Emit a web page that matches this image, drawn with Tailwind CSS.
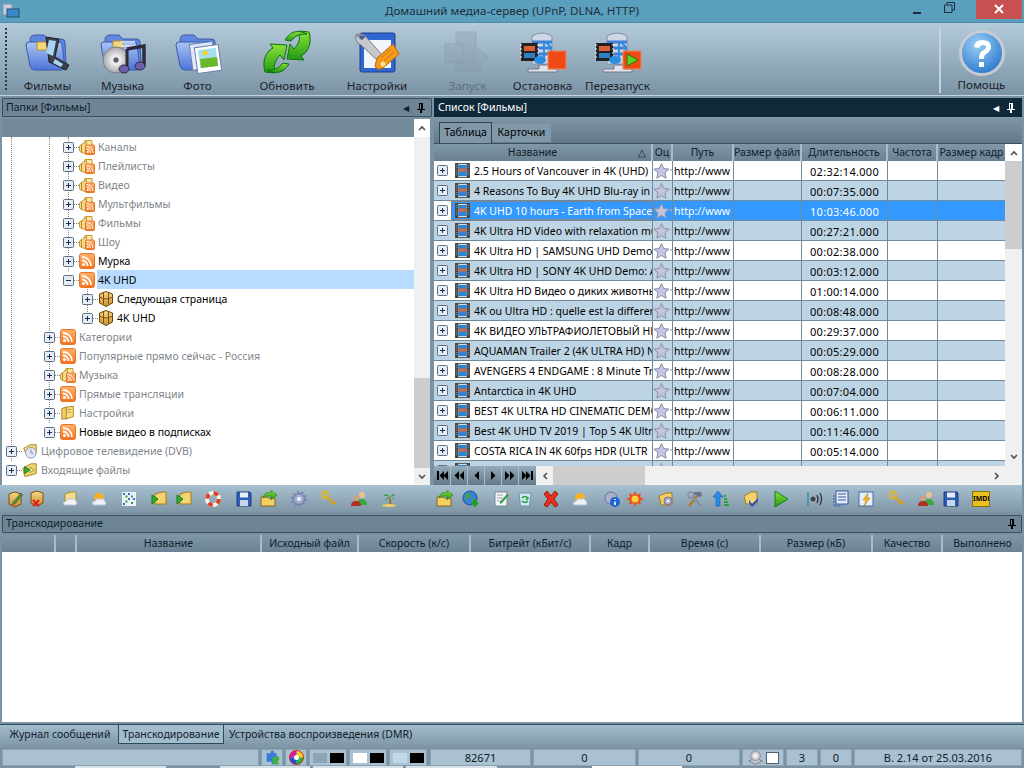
<!DOCTYPE html>
<html lang="ru">
  <head>
    <meta charset="UTF-8" />
    <script src="https://cdn.jsdelivr.net/npm/@tailwindcss/browser@4"></script>
    <title>Домашний медиа-сервер</title>
  </head>
  <body class="w-[1024px] h-[768px] overflow-hidden bg-[#7a92a2] font-['Noto_Sans',sans-serif] text-[10.5px] text-black">
    <!-- icon set -->
    <svg class="absolute w-0 h-0">
      <defs>
        <linearGradient id="gBlue" x1="0" y1="0" x2="0" y2="1"><stop offset="0" stop-color="#a9c4f5" /><stop offset="1" stop-color="#4d74d8" /></linearGradient>
        <linearGradient id="gGreen" x1="0" y1="0" x2="0" y2="1"><stop offset="0" stop-color="#8fe23a" /><stop offset="1" stop-color="#1f9a12" /></linearGradient>
        <linearGradient id="gGold" x1="0" y1="0" x2="0" y2="1"><stop offset="0" stop-color="#f6d98a" /><stop offset="1" stop-color="#c8902a" /></linearGradient>
        <linearGradient id="gOrange" x1="0" y1="0" x2="0" y2="1"><stop offset="0" stop-color="#ffb36b" /><stop offset="1" stop-color="#f5711c" /></linearGradient>
        <radialGradient id="gHelp" cx="0.4" cy="0.3" r="0.8"><stop offset="0" stop-color="#9bd0f5" /><stop offset="1" stop-color="#1f6fc8" /></radialGradient>
        <radialGradient id="gCd" cx="0.5" cy="0.5" r="0.5"><stop offset="0" stop-color="#8a8f96" /><stop offset="0.3" stop-color="#f0f0f0" /><stop offset="1" stop-color="#a8a8ac" /></radialGradient>
        <symbol id="folderBlue" viewBox="0 0 48 48">
          <path d="M6 12q0-5 5-5h9l4 4h13q4 0 4 3l1 22q0 4-4 4H14q-4 0-5-4z" fill="#5f86e0" stroke="#3c5aa8" />
          <path d="M2 17q0-3 3-3h30q3 0 3 3l3 22q0 3-3 3H11q-4 0-5-4z" fill="url(#gBlue)" stroke="#3c5aa8" />
        </symbol>
        <symbol id="server" viewBox="0 0 48 48">
          <path d="M13 8q10-6 20 0v28H13z" fill="#cfd6e4" stroke="#8791a8" />
          <path d="M13 14h20M13 20h20M13 26h20" stroke="#3f7fd6" stroke-width="3" />
          <rect x="2" y="15" width="17" height="18" fill="#222" />
          <rect x="5" y="18" width="11" height="5" fill="#d8603a" />
          <rect x="5" y="25" width="11" height="5" fill="#2f7fc8" />
          <path d="M1 17h2M1 21h2M1 25h2M1 29h2M18 17h2M18 21h2M18 25h2M18 29h2" stroke="#eee" />
          <path d="M25 14v17" stroke="#2a8fe0" stroke-width="2" />
          <ellipse cx="21" cy="32" rx="6" ry="4" fill="#2a8fe0" />
          <path d="M25 14q7 2 7 9" fill="none" stroke="#2a8fe0" stroke-width="2" />
          <path d="M20 37h10v4h8v3H9v-3h11z" fill="#dfe4ea" stroke="#778" />
        </symbol>
        <symbol id="rss" viewBox="0 0 16 16">
          <rect x="0.5" y="0.5" width="15" height="15" rx="2" fill="url(#gOrange)" stroke="#e8762a" />
          <circle cx="4.5" cy="11.5" r="1.6" fill="#fff" />
          <path d="M3 7.5a5.5 5.5 0 0 1 5.5 5.500M3 4a9 9 0 0 1 9 9" fill="none" stroke="#fff" stroke-width="1.8" />
        </symbol>
        <symbol id="rssFolder" viewBox="0 0 16 16">
          <path d="M5 4l1-2.500h7V6" fill="#f8e6a8" stroke="#c89a2a" />
          <path d="M2.500 5.500l5-3V15l-5-1.500zM.5 7l2-1.500v8l-2-1.500z" fill="#f4d98a" stroke="#b8881c" stroke-width="0.800" />
          <rect x="6.500" y="6" width="9" height="9.500" rx="1" fill="url(#gOrange)" stroke="#e07a2a" />
          <circle cx="8.800" cy="13" r="1" fill="#fff" />
          <path d="M7.500 10a4 4 0 0 1 4 4M7.500 7.500a6.500 6.500 0 0 1 6.500 6.500" fill="none" stroke="#fff" />
        </symbol>
        <symbol id="cube" viewBox="0 0 16 16">
          <path d="M1.500 3L8 .5 14.500 3v9L8 15.500 1.500 12z" fill="url(#gGold)" stroke="#6a4408" />
          <path d="M1.500 6Q8 10 14.500 6M5.500 2v11M10.500 2v11" fill="none" stroke="#7a5010" />
        </symbol>
        <symbol id="film" viewBox="0 0 16 16">
          <rect x="0.500" y="0.500" width="15" height="15" fill="#e8ecf0" stroke="#555" />
          <rect x="0.500" y="0.500" width="3" height="15" fill="#3a3a3a" />
          <rect x="12.500" y="0.500" width="3" height="15" fill="#3a3a3a" />
          <rect x="3.500" y="2" width="9" height="6" fill="#2f83d0" />
          <rect x="3.500" y="8" width="9" height="6" fill="#2f83d0" />
          <path d="M3.500 6h9v3h-9z" fill="#d8683a" />
          <path d="M2 2v12M14 2v12" stroke="#ddd" stroke-dasharray="1 1.500" />
        </symbol>
        <symbol id="star" viewBox="0 0 19 18">
          <path d="M8.500 1.500l2.200 5 5.300.6-4 3.700 1.100 5.400-4.600-2.700-4.700 2.700 1.100-5.400-4-3.700 5.300-.6z" fill="#c4c4de" stroke="#8f8fae" />
          <circle cx="18" cy="8" r="1" fill="#b4b4cc" />
        </symbol>
        <symbol id="plus" viewBox="0 0 11 11">
          <rect x="0.500" y="0.500" width="10" height="10" rx="1" fill="#e6ecf4" stroke="#5f6f88" />
          <path d="M3 5.500h5M5.500 3v5" stroke="#1c2c50" />
        </symbol>
        <symbol id="minus" viewBox="0 0 11 11">
          <rect x="0.500" y="0.500" width="10" height="10" rx="1" fill="#e6ecf4" stroke="#5f6f88" />
          <path d="M3 5.500h5" stroke="#1c2c50" />
        </symbol>
        <symbol id="folder" viewBox="0 0 18 18">
          <path d="M6 2.500l9-1V13l-9 3z" fill="#f8e08a" stroke="#a87a18" />
          <path d="M2 4l5-1.500V15l-5 1z" fill="#f2cf62" stroke="#a87a18" />
          <path d="M8 5h5M8 8h5" stroke="#c89a2a" />
        </symbol>
        <symbol id="folderDvb" viewBox="0 0 18 18">
          <path d="M2 6l7-4h7v9H4z" fill="#f4d880" stroke="#a87a18" />
          <circle cx="10" cy="11" r="6" fill="#dfe6f4" stroke="#8a94b0" />
          <path d="M10 7v4l3 1" fill="none" stroke="#7a84a0" />
        </symbol>
        <symbol id="palm" viewBox="0 0 18 18">
          <path d="M9 7q1 5 0 8h2q1-4-1-8z" fill="#9a6a20" />
          <path d="M10 7Q6 2 3 6q4-1 7 1q-4 0-5 4q3-3 5-4q3 0 4 3q1-3-4-3q4-2 5-1q-2-4-5 1z" fill="#2f9a2a" />
          <ellipse cx="9" cy="15.500" rx="7" ry="1.500" fill="#f0d060" />
        </symbol>
        <symbol id="people" viewBox="0 0 18 18">
          <circle cx="12" cy="5" r="3" fill="#f0c08a" />
          <path d="M7 15q0-6 5-6t5 6z" fill="#3aa83a" />
          <circle cx="6" cy="8" r="2.500" fill="#d8a070" />
          <path d="M1 16q0-5 5-5t5 5z" fill="#b03020" />
        </symbol>
        <symbol id="key" viewBox="0 0 18 18">
          <circle cx="5" cy="5" r="3.200" fill="none" stroke="#e8b820" stroke-width="2" />
          <path d="M7.500 7.500l8 6M12 11l-1.500 2M14 12.500l-1.500 2" stroke="#d8a010" stroke-width="2" />
        </symbol>
        <symbol id="floppy" viewBox="0 0 18 18">
          <path d="M2 2h13l1 1v13H2z" fill="#2c5cb8" stroke="#1c3c80" />
          <rect x="5" y="2.500" width="8" height="5" fill="#e8eef8" />
          <rect x="5" y="10" width="8" height="6" fill="#c8d4e8" />
        </symbol>
        <symbol id="gear" viewBox="0 0 18 18">
          <circle cx="9" cy="9" r="5.500" fill="#a0a8d0" stroke="#6870a0" />
          <circle cx="9" cy="9" r="7" fill="none" stroke="#8088b8" stroke-width="2.500" stroke-dasharray="2.200 2.200" />
          <circle cx="9" cy="9" r="2.300" fill="#e8eaf4" />
        </symbol>
        <symbol id="sun" viewBox="0 0 18 18">
          <circle cx="9" cy="8" r="5" fill="#f8b020" />
          <path d="M3 15q-2-3 2-4q1-3 5-2q4-1 5 2q2 2 0 4z" fill="#eef2f8" stroke="#b8c4d4" />
        </symbol>
        <symbol id="folderCloud" viewBox="0 0 18 18">
          <path d="M4 4l6-2h5v10H4z" fill="#f4dc90" stroke="#b08a30" />
          <path d="M3 15q-2-3 2-4q1-3 5-2q4-1 5 2q2 2 0 4z" fill="#f2f4f8" stroke="#b8c4d4" />
        </symbol>
        <symbol id="dots" viewBox="0 0 18 18">
          <rect x="2" y="2" width="14" height="14" fill="#eef2f8" />
          <path d="M3 3h2v2H3zM8 3h2v2H8zM13 8h2v2h-2zM3 13h2v2H3zM8 8h2v2H8z" fill="#2f6fd0" />
          <path d="M5.500 5.500h2v2h-2zM11 5.500h2v2h-2zM5.500 10.500h2v2h-2zM11 12h2v2h-2z" fill="#2fa040" />
        </symbol>
        <symbol id="folderPlay" viewBox="0 0 18 18">
          <path d="M5 4l7-2h4v12H5z" fill="#f4d470" stroke="#a87a18" />
          <path d="M2 5l6 4-6 5z" fill="#2fae2f" stroke="#1a7a1a" />
        </symbol>
        <symbol id="folderGo" viewBox="0 0 18 18">
          <path d="M1 7l9-5h6v11l-11 3H3z" fill="#f4d470" stroke="#a87a18" />
          <path d="M3 5v8l6-4z" fill="#2fae2f" stroke="#1a7a1a" />
          <path d="M9 6l5 3-5 3z" fill="#e8f0a0" stroke="#90a030" />
        </symbol>
        <symbol id="buoy" viewBox="0 0 18 18">
          <circle cx="9" cy="9" r="6" fill="none" stroke="#f2f2f2" stroke-width="4" />
          <circle cx="9" cy="9" r="6" fill="none" stroke="#e0401c" stroke-width="4" stroke-dasharray="4.700 4.700" />
        </symbol>
        <symbol id="folderArrow" viewBox="0 0 18 18">
          <path d="M1 7h6l1 1h7v8H1z" fill="#f2cf62" stroke="#8a6410" />
          <path d="M3 8C4 3 8 2 11 3V0l6 5-6 5V6Q6 5 3 8z" fill="url(#gGreen)" stroke="#1a7a1a" stroke-width="0.600" />
        </symbol>
        <symbol id="boxPen" viewBox="0 0 18 18">
          <path d="M3 4l6-2 6 2v10l-6 3-6-3z" fill="url(#gGold)" stroke="#7a5010" />
          <path d="M7 12l8-9 2 2-8 9-3 1z" fill="#30a030" stroke="#c03030" stroke-width="0.600" />
        </symbol>
        <symbol id="boxX" viewBox="0 0 18 18">
          <path d="M3 3l6-2 6 2v10l-6 3-6-3z" fill="url(#gGold)" stroke="#7a5010" />
          <path d="M5 10l6 6M11 10l-6 6" stroke="#e02020" stroke-width="2.200" />
        </symbol>
        <symbol id="globe" viewBox="0 0 18 18">
          <circle cx="8" cy="8" r="7" fill="#3a80d8" stroke="#1c4c98" />
          <path d="M4 3q4 0 4 3t-3 3-2 3zM10 9q4-1 4 1t-3 3z" fill="#3aa83a" />
          <path d="M13 10v7M9.500 13.500h7" stroke="#20a020" stroke-width="2.400" />
        </symbol>
        <symbol id="note" viewBox="0 0 18 18">
          <rect x="3" y="2" width="12" height="14" fill="#f4f6fa" stroke="#808898" />
          <path d="M5 5h6M5 8h6M5 11h4" stroke="#98a0b0" />
          <path d="M8 12l7-8 2 1-7 8-2 1z" fill="#30a040" />
        </symbol>
        <symbol id="recycle" viewBox="0 0 18 18">
          <path d="M3 3h12l-1.500 13h-9z" fill="#cfe6f4" stroke="#6a98b8" />
          <path d="M6 8q3-3 6 0l-2 2M12 11q-3 3-6 0" fill="none" stroke="#20a030" stroke-width="1.600" />
        </symbol>
        <symbol id="redX" viewBox="0 0 18 18">
          <path d="M2 4l3-3 4 5 4-5 3 3-4 5 4 6-3 2-4-5-4 5-3-2 4-6z" fill="#e8301c" stroke="#981808" />
        </symbol>
        <symbol id="gearInfo" viewBox="0 0 18 18">
          <circle cx="8" cy="8" r="6" fill="#a8b0cc" stroke="#6870a0" />
          <circle cx="12" cy="12" r="5" fill="#1c64d0" />
          <path d="M12 9v1M12 11.500v3.500" stroke="#fff" stroke-width="1.600" />
        </symbol>
        <symbol id="burst" viewBox="0 0 18 18">
          <path d="M9 1l2 4 4-2-1 4 4 2-4 2 1 4-4-2-2 4-2-4-4 2 1-4-4-2 4-2-1-4 4 2z" fill="#e8501c" />
          <circle cx="9" cy="9" r="3.500" fill="#f8d040" />
        </symbol>
        <symbol id="folderGear" viewBox="0 0 18 18">
          <path d="M2 6l7-3h6v12H4z" fill="#f2cf62" stroke="#a87a18" />
          <circle cx="11" cy="11" r="4" fill="#a8a8c0" stroke="#7070a0" />
          <circle cx="11" cy="11" r="1.500" fill="#eee" />
        </symbol>
        <symbol id="tools" viewBox="0 0 18 18">
          <path d="M3 16L12 5" stroke="#b07a30" stroke-width="2.400" />
          <path d="M8 2h7l1 4-3 1-2-2H8z" fill="#68708c" />
          <path d="M15 16L6 6" stroke="#8a8fa0" stroke-width="2.400" />
          <circle cx="5" cy="5" r="3" fill="none" stroke="#8a8fa0" stroke-width="1.600" />
        </symbol>
        <symbol id="upBars" viewBox="0 0 18 18">
          <path d="M6 1l5 6H8v9H4V7H1z" fill="#2a8ce8" stroke="#1860b0" stroke-width="0.600" />
          <path d="M12 15h5M12 12h4M12 9h3M12 6h2" stroke="#30a030" stroke-width="1.800" />
        </symbol>
        <symbol id="folderCheck" viewBox="0 0 18 18">
          <path d="M2 6l7-4h6v12H4z" fill="#f4d470" stroke="#a87a18" />
          <path d="M7 10l3 4 6-6v3l-6 6-3-4z" fill="#2050c0" />
        </symbol>
        <symbol id="play" viewBox="0 0 18 18">
          <path d="M3 1l13 8-13 8z" fill="url(#gGreen)" stroke="#1a7a1a" />
        </symbol>
        <symbol id="sound" viewBox="0 0 18 18">
          <path d="M1 2v14" stroke="#3a90a8" stroke-width="1.600" />
          <circle cx="6" cy="9" r="2.500" fill="#444" />
          <path d="M10 5q2 4 0 8M13 3q3 6 0 12" fill="none" stroke="#334" stroke-width="1.300" />
        </symbol>
        <symbol id="list" viewBox="0 0 18 18">
          <rect x="4" y="1" width="12" height="13" fill="#e4ecf8" stroke="#3858a8" />
          <path d="M6 4h8M6 7h8M6 10h8" stroke="#3858a8" />
          <path d="M2 5v11h8" fill="none" stroke="#3858a8" stroke-dasharray="2 1" />
        </symbol>
        <symbol id="bolt" viewBox="0 0 18 18">
          <rect x="2" y="2" width="14" height="14" fill="#e8eef8" stroke="#4868a8" />
          <path d="M11 3l-5 7h3l-2 6 6-8h-3z" fill="#f0b820" stroke="#a87a10" stroke-width="0.500" />
        </symbol>
        <symbol id="puzzle" viewBox="0 0 18 18">
          <path d="M2 4h5q-1-3 2-3t2 3h3v4q3-1 3 2t-3 2v5H8v-3H2z" fill="#3a7ad8" />
          <path d="M9 8h8v4l-2 1 2 4H9z" fill="#40b040" />
        </symbol>
        <symbol id="disc" viewBox="0 0 18 18">
          <path d="M1 13l8-3 8 3-8 4z" fill="#c8ccd4" stroke="#707880" />
          <circle cx="9" cy="7" r="6" fill="url(#gCd)" stroke="#9090a8" />
          <circle cx="9" cy="7" r="1.500" fill="#fff" />
        </symbol>
        <symbol id="wheel" viewBox="0 0 18 18">
          <circle cx="9" cy="9" r="8" fill="none" stroke="#e02020" stroke-width="2" />
          <path d="M9 1a8 8 0 0 1 8 8H9z" fill="#f0d020" />
          <path d="M17 9a8 8 0 0 1-8 8V9z" fill="#30b030" />
          <path d="M9 17a8 8 0 0 1-8-8h8z" fill="#2050d0" />
          <path d="M1 9a8 8 0 0 1 8-8v8z" fill="#d020a0" />
          <circle cx="9" cy="9" r="3" fill="#fff" />
        </symbol>
      </defs>
    </svg>

    <!-- title bar -->
    <div class="h-[23px] bg-[#5b9fbe] flex items-center border-b border-[#4f8ba6]">
      <svg class="w-[18px] h-[16px] ml-[2px]" viewBox="0 0 18 16">
        <rect x="1" y="1" width="9" height="11" fill="#c8cede" stroke="#8a90a8" />
        <rect x="5" y="6" width="12" height="8" fill="#3a88c8" stroke="#24506e" />
      </svg>
      <div class="flex-1 text-center text-[11.6px] text-[#1d2e38] pl-[91px] mb-[1px]">Домашний медиа-сервер (UPnP, DLNA, HTTP)</div>
      <div class="w-[8px] h-[2px] bg-[#18303e] mr-[23px] mt-[4px]"></div>
      <svg class="w-[11px] h-[11px] mr-[21px] mb-[7px]" viewBox="0 0 11 11"><path d="M3 3V.5h7.500V8H8M.5 3h7.500v7.500H.5z" fill="none" stroke="#18303e" /></svg>
      <div class="w-[46px] h-[19px] mr-[2px] mb-[4px] bg-[#c75050] flex items-center justify-center">
        <svg class="w-[10px] h-[10px]" viewBox="0 0 10 10"><path d="M1 1l8 8M9 1l-8 8" stroke="#fff" stroke-width="2" /></svg>
      </div>
    </div>

    <!-- main toolbar -->
    <div class="h-[73px] bg-gradient-to-b from-[#b3cbdb] to-[#7b94a5] border-b border-[#c4d3dd] flex text-[11.6px] text-[#1a2228]">
      <div class="w-[2px] mt-[5px] mb-[5px] ml-[5px] border-l-2 border-dotted border-[#2c3e4a]"></div>
      <div class="w-[75px] ml-[3px] flex flex-col items-center">
        <svg class="w-[48px] h-[48px] mt-[5px]" viewBox="0 0 48 48">
          <use href="#folderBlue" />
          <rect x="13" y="14" width="10" height="8" fill="#f2d880" stroke="#b89030" />
          <path d="M22 9l13 2-4 18 14 8-3 5-17-8z" fill="#3c4048" stroke="#222" />
          <path d="M25 12l7 1-3 15-7-3zM31 31l8 5-2 3-8-4z" fill="#a8d4f4" />
        </svg>
        <span class="mt-[3px] leading-[14px]">Фильмы</span>
      </div>
      <div class="w-[75px] flex flex-col items-center">
        <svg class="w-[48px] h-[48px] mt-[5px]" viewBox="0 0 48 48">
          <use href="#folderBlue" />
          <rect x="14" y="13" width="10" height="7" fill="#f2d880" stroke="#b89030" />
          <path d="M22 14h14M22 18h14" stroke="#dfe8fa" stroke-width="1.500" />
          <circle cx="17" cy="32" r="13" fill="url(#gCd)" stroke="#7a7e88" />
          <circle cx="17" cy="32" r="2.500" fill="#555c70" />
          <path d="M28 21l17-3v20" fill="none" stroke="#2c2c3e" stroke-width="3.500" />
          <path d="M28 21v19" stroke="#2c2c3e" stroke-width="3" />
          <ellipse cx="25" cy="41" rx="5" ry="4" fill="#6a60a8" stroke="#2c2c3e" />
          <ellipse cx="41" cy="38" rx="5" ry="4" fill="#6a60a8" stroke="#2c2c3e" />
        </svg>
        <span class="mt-[3px] leading-[14px]">Музыка</span>
      </div>
      <div class="w-[75px] flex flex-col items-center">
        <svg class="w-[48px] h-[48px] mt-[5px]" viewBox="0 0 48 48">
          <use href="#folderBlue" />
          <rect x="17" y="15" width="23" height="26" fill="#dfe8fa" stroke="#6a80b0" transform="rotate(-8 28 28)" />
          <rect x="22" y="18" width="24" height="26" fill="#fff" stroke="#6a80b0" transform="rotate(-8 34 31)" />
          <rect x="25" y="21" width="18" height="18" fill="#a8dcf0" transform="rotate(-8 34 30)" />
          <path d="M26 31l17-2 1 9-17 2z" fill="#6ab82a" />
          <circle cx="31" cy="25" r="2.500" fill="#f8d020" />
        </svg>
        <span class="mt-[3px] leading-[14px]">Фото</span>
      </div>
      <div class="w-[90px] ml-[7px] flex flex-col items-center">
        <svg class="w-[48px] h-[48px] mt-[5px]" viewBox="0 0 48 48">
          <path d="M2 44c-3-10 0-20 8-24l-3-4 17 1-3 15-4-5c-4 4-7 10-5 18z" fill="url(#gGreen)" stroke="#107010" />
          <path d="M46 4c3 10 0 20-8 24l3 4-17-1 3-15 4 5c4-4 7-10 5-18z" fill="url(#gGreen)" stroke="#107010" />
          <path d="M44 6C32 0 26 6 22 12l6 1q6-8 16-7z" fill="url(#gGreen)" stroke="#107010" />
          <path d="M4 42C16 48 22 42 26 36l-6-1q-6 8-16 7z" fill="url(#gGreen)" stroke="#107010" />
        </svg>
        <span class="mt-[3px] leading-[14px]">Обновить</span>
      </div>
      <div class="w-[90px] flex flex-col items-center">
        <svg class="w-[48px] h-[48px] mt-[5px]" viewBox="0 0 48 48">
          <rect x="7" y="5" width="35" height="39" rx="2" fill="#2f66cf" stroke="#1c3c8c" />
          <rect x="11" y="12" width="27" height="28" fill="#f2f5fb" />
          <path d="M3 7a8 8 0 0 1 11 3l16 18-5 5L8 17a8 8 0 0 1-5-10l6 5 4-4z" fill="#c6c8cc" stroke="#7a7c82" />
          <path d="M24 30l16-14 6 10-16 14q-6 3-8-2z" fill="#f59a1c" stroke="#b86a0c" />
          <path d="M28 30l10-9M31 33l10-9" stroke="#c87808" />
          <circle cx="30" cy="36" r="2.500" fill="#fbe0a0" />
        </svg>
        <span class="mt-[3px] leading-[14px]">Настройки</span>
      </div>
      <div class="w-[75px] ml-[8px] flex flex-col items-center">
        <svg class="w-[48px] h-[48px] mt-[5px] opacity-30" viewBox="0 0 48 48">
          <g fill="#889aa8" stroke="#6e808e">
            <path d="M12 4h20v32H12z" />
            <rect x="1" y="16" width="18" height="18" />
            <path d="M30 18l15 12-15 12z" />
            <path d="M10 38h26v5H10z" />
          </g>
        </svg>
        <span class="mt-[3px] leading-[14px] text-[#5f707c]">Запуск</span>
      </div>
      <div class="w-[75px] flex flex-col items-center">
        <svg class="w-[48px] h-[48px] mt-[5px]" viewBox="0 0 48 48">
          <use href="#server" />
          <rect x="29" y="23" width="18" height="18" fill="#f04a14" stroke="#e88a5a" />
        </svg>
        <span class="mt-[3px] leading-[14px]">Остановка</span>
      </div>
      <div class="w-[75px] flex flex-col items-center">
        <svg class="w-[48px] h-[48px] mt-[5px]" viewBox="0 0 48 48">
          <use href="#server" />
          <rect x="29" y="23" width="18" height="18" fill="#f04a14" stroke="#e88a5a" />
          <path d="M33 26l11 6-11 6z" fill="#60d020" stroke="#287010" />
        </svg>
        <span class="mt-[3px] leading-[14px]">Перезапуск</span>
      </div>
      <div class="w-[2px] ml-auto mt-[5px] mb-[2px] bg-[#c4d3dd]"></div>
      <div class="w-[81px] mr-[2px] flex flex-col items-center">
        <svg class="w-[46px] h-[46px] mt-[7px]" viewBox="0 0 46 46">
          <circle cx="23" cy="23" r="21.500" fill="url(#gHelp)" stroke="#c8ccd2" stroke-width="3" />
          <path d="M15 17q1-7 8-7 9 0 9 7 0 4-5 7-2 1-2 5h-5q0-6 3-8 4-2 4-4 0-2-3-2-3 0-4 3zM20 32h5v5h-5z" fill="#fff" />
        </svg>
        <span class="mt-[2px] leading-[14px]">Помощь</span>
      </div>
    </div>

    <!-- folders and list -->
    <div class="h-[416px] flex">
      <div class="w-[430px] ml-[2px] pt-[2px] flex flex-col">
        <div class="h-[19px] bg-[#6e8595] border border-[#3a5060] rounded-[1px] flex items-center pl-[3px] pr-[6px] pt-[1px] text-[#10202a]">
          <span class="flex-1">Папки [Фильмы]</span>
          <span class="text-[8px] mr-[8px]">◀</span>
          <svg class="w-[8px] h-[10px]" viewBox="0 0 8 10"><path d="M2 0h4v6h2v1H5v3H3V7H0V6h2zM3 1v5h1V1z" fill="#000" /></svg>
        </div>
        <div class="h-[366px] mt-[2px] flex">
          <div class="w-[412px] flex flex-col">
            <div class="h-[18px] bg-[#728a9a]"></div>
            <div id="tree" class="flex-1 bg-white relative overflow-hidden"></div>
          </div>
          <div class="w-[16px] flex flex-col bg-[#f0f0f0]">
            <div class="h-[18px] bg-white flex items-center justify-center"><svg class="w-[8px] h-[6px]" viewBox="0 0 8 6"><path d="M1 5l3-3 3 3" fill="none" stroke="#505050" stroke-width="1.600" /></svg></div>
            <div class="h-[241px]"></div>
            <div class="h-[90px] bg-[#cdcdcd]"></div>
            <div class="flex-1 flex items-center justify-center"><svg class="w-[8px] h-[6px]" viewBox="0 0 8 6"><path d="M1 1l3 3 3-3" fill="none" stroke="#505050" stroke-width="1.600" /></svg></div>
          </div>
        </div>
        <div class="flex-1 bg-gradient-to-b from-[#a8c1d1] to-[#7f97a7] flex items-center pl-[4px] -ml-[2px] w-[436px]">
          <svg class="w-[18px] h-[18px] ml-[2px]"><use href="#boxPen" /></svg>
          <svg class="w-[18px] h-[18px] ml-[4px]"><use href="#boxX" /></svg>
          <svg class="w-[18px] h-[18px] ml-[15px]"><use href="#folderCloud" /></svg>
          <svg class="w-[18px] h-[18px] ml-[11px]"><use href="#sun" /></svg>
          <svg class="w-[18px] h-[18px] ml-[12px]"><use href="#dots" /></svg>
          <svg class="w-[18px] h-[18px] ml-[12px]"><use href="#folderPlay" /></svg>
          <svg class="w-[18px] h-[18px] ml-[7px]"><use href="#folderPlay" /></svg>
          <svg class="w-[18px] h-[18px] ml-[11px]"><use href="#buoy" /></svg>
          <svg class="w-[18px] h-[18px] ml-[13px]"><use href="#floppy" /></svg>
          <svg class="w-[18px] h-[18px] ml-[7px]"><use href="#folderArrow" /></svg>
          <svg class="w-[18px] h-[18px] ml-[12px]"><use href="#gear" /></svg>
          <svg class="w-[18px] h-[18px] ml-[12px]"><use href="#key" /></svg>
          <svg class="w-[18px] h-[18px] ml-[12px]"><use href="#people" /></svg>
          <svg class="w-[18px] h-[18px] ml-[12px]"><use href="#palm" /></svg>
        </div>
      </div>

      <div class="w-[588px] ml-[2px] pt-[2px] flex flex-col">
        <div class="h-[19px] bg-[#10293a] flex items-center pl-[4px] pr-[7px] pt-[1px] text-white">
          <span class="flex-1">Список [Фильмы]</span>
          <span class="text-[8px] mr-[8px]">◀</span>
          <svg class="w-[8px] h-[10px]" viewBox="0 0 8 10"><path d="M2 0h4v6h2v1H5v3H3V7H0V6h2zM3 1v5h1V1z" fill="#fff" /></svg>
        </div>
        <div class="h-[27px] bg-gradient-to-b from-[#7f97a7] to-[#627a8a] border-b border-[#3a5060] flex items-end pl-[5px]">
          <div class="h-[21px] w-[53px] bg-[#7f97a7] border border-b-0 border-[#2c4454] flex items-center justify-center">Таблица</div>
          <div class="h-[18px] w-[59px] bg-[#8098a8] flex items-center justify-center mb-[1px]">Карточки</div>
        </div>
        <div class="h-[322px] flex bg-white">
          <div class="w-[571px] flex flex-col overflow-hidden">
            <div class="h-[17px] shrink-0 flex bg-gradient-to-b from-[#7f97a7] to-[#6a8292] text-center leading-[17px] text-[#10202a]">
              <div class="w-[219px] border-r-2 border-[#a9bcc9] relative pr-[20px]">Название<span class="absolute right-[5px] top-0 text-[10px]">△</span></div>
              <div class="w-[20px] border-r-2 border-[#a9bcc9] overflow-hidden">Оц</div>
              <div class="w-[61px] border-r-2 border-[#a9bcc9]">Путь</div>
              <div class="w-[68px] border-r-2 border-[#a9bcc9] overflow-hidden whitespace-nowrap">Размер файл</div>
              <div class="w-[86px] border-r-2 border-[#a9bcc9]">Длительность</div>
              <div class="w-[50px] border-r-2 border-[#a9bcc9]">Частота</div>
              <div class="flex-1 overflow-hidden whitespace-nowrap">Размер кадр</div>
            </div>
            <div id="rows"></div>
          </div>
          <div class="w-[17px] flex flex-col bg-[#f0f0f0]">
            <div class="h-[17px] bg-white flex items-center justify-center"><svg class="w-[8px] h-[6px]" viewBox="0 0 8 6"><path d="M1 5l3-3 3 3" fill="none" stroke="#505050" stroke-width="1.600" /></svg></div>
            <div class="h-[88px] bg-[#cdcdcd]"></div>
            <div class="flex-1 flex items-end justify-center pb-[6px]"><svg class="w-[8px] h-[6px]" viewBox="0 0 8 6"><path d="M1 1l3 3 3-3" fill="none" stroke="#505050" stroke-width="1.600" /></svg></div>
          </div>
        </div>
        <div class="h-[19px] flex bg-[#f0f0f0]">
          <div class="w-[102px] flex bg-gradient-to-b from-[#93abbb] to-[#63798a]">
            <div class="w-[17px] border-r border-[#a9bcc9] flex items-center justify-center"><svg class="w-[11px] h-[9px]" viewBox="0 0 11 9"><path d="M0 0h2v9H0zM7 0v9L2.500 4.500zM11 0v9L6.500 4.500z" /></svg></div>
            <div class="w-[17px] border-r border-[#a9bcc9] flex items-center justify-center"><svg class="w-[10px] h-[9px]" viewBox="0 0 10 9"><path d="M5 0v9L.5 4.500zM10 0v9L5.500 4.500z" /></svg></div>
            <div class="w-[17px] border-r border-[#a9bcc9] flex items-center justify-center"><svg class="w-[5px] h-[9px]" viewBox="0 0 5 9"><path d="M5 0v9L.5 4.500z" /></svg></div>
            <div class="w-[17px] border-r border-[#a9bcc9] flex items-center justify-center"><svg class="w-[5px] h-[9px]" viewBox="0 0 5 9"><path d="M0 0v9l4.500-4.500z" /></svg></div>
            <div class="w-[17px] border-r border-[#a9bcc9] flex items-center justify-center"><svg class="w-[10px] h-[9px]" viewBox="0 0 10 9"><path d="M0 0v9l4.500-4.500zM5 0v9l4.500-4.500z" /></svg></div>
            <div class="w-[17px] flex items-center justify-center"><svg class="w-[11px] h-[9px]" viewBox="0 0 11 9"><path d="M9 0h2v9H9zM0 0v9l4.500-4.500zM4 0v9l4.500-4.500z" /></svg></div>
          </div>
          <div class="w-[17px] flex items-center justify-center"><svg class="w-[6px] h-[8px]" viewBox="0 0 6 8"><path d="M5 1L2 4l3 3" fill="none" stroke="#505050" stroke-width="1.600" /></svg></div>
          <div class="w-[92px] bg-[#cdcdcd]"></div>
          <div class="flex-1 flex items-center justify-end pr-[22px]"><svg class="w-[6px] h-[8px]" viewBox="0 0 6 8"><path d="M1 1l3 3-3 3" fill="none" stroke="#505050" stroke-width="1.600" /></svg></div>
        </div>
        <div class="flex-1 bg-gradient-to-b from-[#a8c1d1] to-[#7f97a7] flex items-center pl-[2px]">
          <svg class="w-[18px] h-[18px]"><use href="#folderArrow" /></svg>
          <svg class="w-[18px] h-[18px] ml-[8px]"><use href="#globe" /></svg>
          <svg class="w-[18px] h-[18px] ml-[12px]"><use href="#note" /></svg>
          <svg class="w-[18px] h-[18px] ml-[6px]"><use href="#recycle" /></svg>
          <svg class="w-[18px] h-[18px] ml-[8px]"><use href="#redX" /></svg>
          <svg class="w-[18px] h-[18px] ml-[11px]"><use href="#sun" /></svg>
          <svg class="w-[18px] h-[18px] ml-[14px]"><use href="#gearInfo" /></svg>
          <svg class="w-[18px] h-[18px] ml-[5px]"><use href="#burst" /></svg>
          <svg class="w-[18px] h-[18px] ml-[13px]"><use href="#folderGear" /></svg>
          <svg class="w-[18px] h-[18px] ml-[11px]"><use href="#tools" /></svg>
          <svg class="w-[18px] h-[18px] ml-[8px]"><use href="#upBars" /></svg>
          <svg class="w-[18px] h-[18px] ml-[12px]"><use href="#folderCheck" /></svg>
          <svg class="w-[18px] h-[18px] ml-[12px]"><use href="#play" /></svg>
          <svg class="w-[18px] h-[18px] ml-[17px]"><use href="#sound" /></svg>
          <svg class="w-[18px] h-[18px] ml-[7px]"><use href="#list" /></svg>
          <svg class="w-[18px] h-[18px] ml-[7px]"><use href="#bolt" /></svg>
          <svg class="w-[18px] h-[18px] ml-[13px]"><use href="#key" /></svg>
          <svg class="w-[18px] h-[18px] ml-[11px]"><use href="#people" /></svg>
          <svg class="w-[18px] h-[18px] ml-[7px]"><use href="#floppy" /></svg>
          <div class="w-[18px] h-[16px] ml-[12px] bg-[#e8c020] border border-[#8a7010] text-[7px] font-bold leading-[14px] text-center overflow-hidden">IMDb</div>
        </div>
      </div>
    </div>

    <!-- transcoding -->
    <div class="h-[210px] mx-[2px] pt-[3px] flex flex-col">
      <div class="h-[18px] bg-[#6e8595] border border-[#3a5060] rounded-[1px] flex items-center pl-[3px] pr-[5px] text-[#10202a]">
        <span class="flex-1">Транскодирование</span>
        <svg class="w-[8px] h-[10px]" viewBox="0 0 8 10"><path d="M2 0h4v6h2v1H5v3H3V7H0V6h2zM3 1v5h1V1z" fill="#000" /></svg>
      </div>
      <div class="h-[17px] mt-[2px] flex bg-gradient-to-b from-[#7f97a7] to-[#6a8292] text-center leading-[17px] text-[#10202a] whitespace-nowrap">
        <div class="w-[54px] border-r-2 border-[#a9bcc9]"></div>
        <div class="w-[21px] border-r-2 border-[#a9bcc9]"></div>
        <div class="w-[185px] border-r-2 border-[#a9bcc9]">Название</div>
        <div class="w-[97px] border-r-2 border-[#a9bcc9]">Исходный файл</div>
        <div class="w-[112px] border-r-2 border-[#a9bcc9]">Скорость (к/с)</div>
        <div class="w-[120px] border-r-2 border-[#a9bcc9]">Битрейт (кБит/с)</div>
        <div class="w-[59px] border-r-2 border-[#a9bcc9]">Кадр</div>
        <div class="w-[111px] border-r-2 border-[#a9bcc9]">Время (с)</div>
        <div class="w-[112px] border-r-2 border-[#a9bcc9]">Размер (кБ)</div>
        <div class="w-[70px] border-r-2 border-[#a9bcc9]">Качество</div>
        <div class="flex-1">Выполнено</div>
      </div>
      <div class="flex-1 bg-white"></div>
    </div>

    <!-- bottom tabs -->
    <div class="h-[25px] mt-[2px] border-t border-[#2c4a5c] bg-gradient-to-b from-[#a3bccc] to-[#7a92a2] flex items-start pl-[2px] text-[#10202a]">
      <div class="w-[116px] h-[19px] leading-[18px] text-center">Журнал сообщений</div>
      <div class="w-[106px] h-[19px] leading-[18px] text-center bg-[#a3bccc] border-x border-b border-[#2c4a5c]">Транскодирование</div>
      <div class="h-[19px] leading-[18px] pl-[5px]">Устройства воспроизведения (DMR)</div>
    </div>

    <!-- status bar -->
    <div class="h-[17px] flex gap-[2px] px-[2px] text-[#10202a] text-center leading-[16px]">
      <div class="w-[257px] bg-[#a9c1d1] border border-[#8aa2b2]"></div>
      <div class="w-[22px] bg-[#a9c1d1] border border-[#8aa2b2] flex items-center justify-center"><svg class="w-[15px] h-[15px]"><use href="#puzzle" /></svg></div>
      <div class="w-[22px] bg-[#a9c1d1] border border-[#8aa2b2] flex items-center justify-center"><svg class="w-[15px] h-[15px]"><use href="#wheel" /></svg></div>
      <div class="w-[38px] bg-[#a9c1d1] border border-[#8aa2b2] flex items-center justify-center gap-[3px]"><span class="w-[14px] h-[10px] bg-[#8ca4b4]"></span><span class="w-[14px] h-[10px] bg-black"></span></div>
      <div class="w-[38px] bg-[#a9c1d1] border border-[#8aa2b2] flex items-center justify-center gap-[3px]"><span class="w-[14px] h-[10px] bg-white"></span><span class="w-[14px] h-[10px] bg-black"></span></div>
      <div class="w-[38px] bg-[#a9c1d1] border border-[#8aa2b2] flex items-center justify-center gap-[3px]"><span class="w-[14px] h-[10px] bg-[#c0d8e8]"></span><span class="w-[14px] h-[10px] bg-black"></span></div>
      <div class="w-[101px] bg-[#a9c1d1] border border-[#8aa2b2] ml-[1px] text-[11px]">82671</div>
      <div class="w-[103px] bg-[#a9c1d1] border border-[#8aa2b2] text-[11px]">0</div>
      <div class="w-[102px] bg-[#a9c1d1] border border-[#8aa2b2] text-[11px]">0</div>
      <div class="w-[42px] bg-[#a9c1d1] border border-[#8aa2b2] flex items-center justify-center gap-[3px]"><svg class="w-[15px] h-[15px]"><use href="#disc" /></svg><span class="w-[13px] h-[12px] bg-white border border-[#4a6272]"></span></div>
      <div class="w-[32px] bg-[#a9c1d1] border border-[#8aa2b2] text-[11px]">3</div>
      <div class="w-[32px] bg-[#a9c1d1] border border-[#8aa2b2] text-[11px]">0</div>
      <div class="flex-1 bg-[#a9c1d1] border border-[#8aa2b2] text-[11px]">В. 2.14 от 25.03.2016</div>
    </div>
    <div class="h-[2px] flex">
      <div class="w-[91px] ml-[75px] bg-[#d8e2ea]"></div>
      <div class="w-[90px] ml-[54px] bg-[#d8e2ea]"></div>
      <div class="w-[90px] ml-[3px] bg-[#d8e2ea]"></div>
      <div class="w-[91px] ml-[3px] bg-[#d8e2ea]"></div>
      <div class="w-[90px] ml-[95px] bg-white"></div>
    </div>

    <script>
      // дерево папок: [уровень, значок, текст, яркий, раскрыт]
      const treeData = [
        [2, "rssFolder", "Каналы"],
        [2, "rssFolder", "Плейлисты"],
        [2, "rssFolder", "Видео"],
        [2, "rssFolder", "Мультфильмы"],
        [2, "rssFolder", "Фильмы"],
        [2, "rssFolder", "Шоу"],
        [2, "rss", "Мурка", true],
        [2, "rss", "4K UHD", true, true],
        [3, "cube", "Следующая страница", true],
        [3, "cube", "4K UHD", true],
        [1, "rss", "Категории"],
        [1, "rss", "Популярные прямо сейчас - Россия"],
        [1, "rssFolder", "Музыка"],
        [1, "rss", "Прямые трансляции"],
        [1, "folder", "Настройки"],
        [1, "rss", "Новые видео в подписках", true],
        [0, "folderDvb", "Цифровое телевидение (DVB)"],
        [0, "folderGo", "Входящие файлы"],
      ];
      const indent = ["pl-[4px]", "pl-[42px]", "pl-[61px]", "pl-[80px]"];
      const tree = document.querySelector("#tree");
      let treeHtml = `
        <div class="absolute left-[9px] top-0 h-[324px] border-l border-dotted border-[#888]"></div>
        <div class="absolute left-[47px] top-0 h-[286px] border-l border-dotted border-[#888]"></div>
        <div class="absolute left-[66px] top-0 h-[134px] border-l border-dotted border-[#888]"></div>
        <div class="absolute left-[85px] top-[143px] h-[38px] border-l border-dotted border-[#888]"></div>`;
      treeData.forEach(([level, icon, text, bright, open]) => {
        const selected = open ? "bg-[#b8dcff]" : "";
        const color = bright ? "text-black" : "text-[#80868c]";
        treeHtml += `
        <div class="h-[19px] flex items-center relative ${indent[level]}">
          <svg class="w-[11px] h-[11px] shrink-0 mt-[1px]"><use href="#${open ? "minus" : "plus"}" /></svg>
          <div class="w-[5px] border-t border-dotted border-[#888] mt-[1px]"></div>
          <svg class="w-[16px] h-[16px] shrink-0 mt-[1px]"><use href="#${icon}" /></svg>
          <div class="ml-[2px] pl-[1px] h-[19px] leading-[20px] flex-1 whitespace-nowrap ${selected} ${color}">${text}</div>
        </div>`;
      });
      tree.innerHTML = treeHtml;

      // таблица
      const movies = [
        ["2.5 Hours of Vancouver in 4K (UHD)", "02:32:14.000"],
        ["4 Reasons To Buy 4K UHD Blu-ray in", "00:07:35.000"],
        ["4K UHD 10 hours - Earth from Space", "10:03:46.000"],
        ["4K Ultra HD Video with relaxation mus", "00:27:21.000"],
        ["4K Ultra HD | SAMSUNG UHD Demo: N", "00:02:38.000"],
        ["4K Ultra HD | SONY 4K UHD Demo: Au", "00:03:12.000"],
        ["4K Ultra HD Видео о диких животны", "01:00:14.000"],
        ["4K ou Ultra HD : quelle est la differer", "00:08:48.000"],
        ["4K ВИДЕО УЛЬТРАФИОЛЕТОВЫЙ HD", "00:29:37.000"],
        ["AQUAMAN Trailer 2 (4K ULTRA HD) N", "00:05:29.000"],
        ["AVENGERS 4 ENDGAME : 8 Minute Tr", "00:08:28.000"],
        ["Antarctica in 4K UHD", "00:07:04.000"],
        ["BEST 4K ULTRA HD CINEMATIC DEMC", "00:06:11.000"],
        ["Best 4K UHD TV 2019 | Top 5 4K Ultra", "00:11:46.000"],
        ["COSTA RICA IN 4K 60fps HDR (ULTR", "00:05:14.000"],
        ["", ""],
      ];
      document.querySelector("#rows").innerHTML = movies
        .map(([name, time], i) => {
          const active = i === 2;
          const bg = active ? "bg-[#3399ff] text-white" : i % 2 ? "bg-[#bcd4e4]" : "bg-white";
          const nameBox = active ? "outline-1 outline-dotted outline-[#c86a20] -outline-offset-1" : "";
          return `
          <div class="h-[20px] flex border-b border-[#6f8a9c] ${bg}">
            <div class="w-[17px] flex items-center justify-center shrink-0 ${active ? "bg-white" : ""}"><svg class="w-[11px] h-[11px]"><use href="#plus" /></svg></div>
            <div class="w-[202px] flex items-center whitespace-nowrap overflow-hidden border-r border-[#6f8a9c] ${nameBox}">
              <svg class="w-[15px] h-[15px] ml-[4px] mr-[4px] shrink-0"><use href="#film" /></svg><span class="leading-[21px] mt-[1px]">${name}</span>
            </div>
            <div class="w-[20px] border-r border-[#6f8a9c] flex items-center shrink-0 overflow-hidden"><svg class="w-[19px] h-[18px] shrink-0"><use href="#star" /></svg></div>
            <div class="w-[61px] border-r border-[#6f8a9c] pl-[1px] leading-[21px] overflow-hidden whitespace-nowrap">${name ? "http://www" : ""}</div>
            <div class="w-[68px] border-r border-[#6f8a9c]"></div>
            <div class="w-[86px] border-r border-[#6f8a9c] text-center text-[11px] leading-[21px] tracking-[0.3px]">${time}</div>
            <div class="w-[50px] border-r border-[#6f8a9c]"></div>
            <div class="flex-1"></div>
          </div>`;
        })
        .join("");
    </script>
  </body>
</html>
